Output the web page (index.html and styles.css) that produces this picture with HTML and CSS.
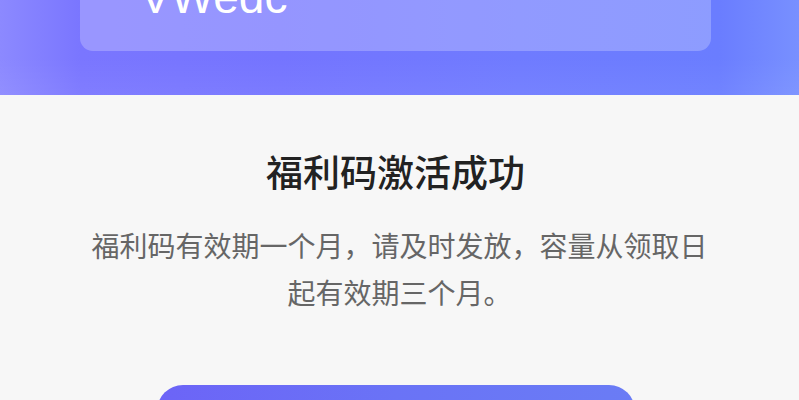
FILE: index.html
```html
<!DOCTYPE html>
<html lang="zh-CN">
<head>
<meta charset="utf-8">
<title>福利码激活成功</title>
<link rel="stylesheet" href="styles.css">
</head>
<body>
<div class="page">
  <header class="hero">
    <div class="card">
      <div class="code">VWedc</div>
    </div>
  </header>
  <main class="content">
    <h1 class="title">福利码激活成功</h1>
    <p class="desc">福利码有效期一个月，请及时发放，容量从领取日起有效期三个月。</p>
    <button class="btn" type="button" aria-label="确定"></button>
  </main>
</div>
</body>
</html>
```

FILE: styles.css
```css
html, body {
  margin: 0;
  padding: 0;
  background: #f7f7f7;
  overflow: hidden;
}
body {
  font-family: "Noto Sans CJK SC", "Noto Sans", sans-serif;
}
.page {
  width: 799px;
  height: 400px;
  overflow: hidden;
}
.hero {
  height: 95px;
  background:
    linear-gradient(180deg, rgba(255,255,255,0) 60%, rgba(255,255,255,0.05) 100%),
    linear-gradient(90deg, #8c89ff 0%, #7a76ff 10%, #7474ff 35%, #6f7bff 65%, #6a7dff 90%, #7890ff 100%);
  overflow: hidden;
}
.card {
  margin: -40px 88px 0 80px;
  height: 91px;
  padding: 14px 0 0 60px;
  box-sizing: border-box;
  border-radius: 13px;
  background: rgba(255, 255, 255, 0.24);
}
.code {
  font-family: "Liberation Sans", Arial, sans-serif;
  font-size: 46px;
  line-height: 46px;
  color: #ffffff;
}
.content {
  display: flex;
  flex-direction: column;
  align-items: center;
  padding-top: 51px;
}
.title {
  margin: 0 0 0 -8px;
  font-size: 37px;
  line-height: 50px;
  font-weight: 500;
  color: #222222;
}
.desc {
  margin: 26px 0 0;
  width: 632px;
  font-size: 28px;
  line-height: 47px;
  font-weight: 400;
  color: #666666;
  text-align: center;
}
.btn {
  display: block;
  margin: 69px 0 0 -8px;
  width: 478px;
  height: 96px;
  border: none;
  border-radius: 26px;
  background: linear-gradient(90deg, #6c64f7 0%, #6a73f6 50%, #6a7cf5 100%);
}
```
